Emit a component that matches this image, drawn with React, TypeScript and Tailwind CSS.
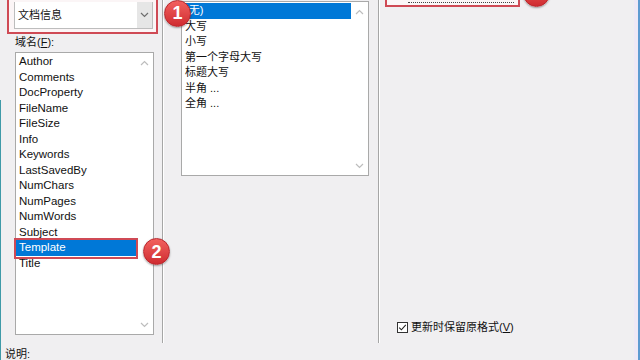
import React from "react"

const fields = [
  "Author",
  "Comments",
  "DocProperty",
  "FileName",
  "FileSize",
  "Info",
  "Keywords",
  "LastSavedBy",
  "NumChars",
  "NumPages",
  "NumWords",
  "Subject",
  "Template",
  "Title",
]

const formats = ["(无)", "大写", "小写", "第一个字母大写", "标题大写", "半角 ...", "全角 ..."]

function Chevron({ up, color = "#bdbdbd" }: { up?: boolean; color?: string }) {
  return (
    <svg width="9" height="6" viewBox="0 0 9 6">
      <polyline
        points={up ? "1,5 4.5,1.5 8,5" : "1,1 4.5,4.5 8,1"}
        fill="none"
        stroke={color}
        strokeWidth="1.2"
      />
    </svg>
  )
}

function Badge({ n, className }: { n: string; className: string }) {
  return (
    <div
      className={`absolute z-20 flex h-[27px] w-[27px] items-center justify-center rounded-full border border-[#b8262c] bg-gradient-to-b from-[#f2605f] to-[#cf2a30] text-[18px] font-bold leading-none text-white shadow-[0_1px_2px_rgba(0,0,0,0.35)] ${className}`}
    >
      {n}
    </div>
  )
}

function Separator() {
  return <div className="h-[343px] w-[2px] border-l border-r border-l-[#a6a6a6] border-r-white" />
}

export default function App() {
  return (
    <div className="flex h-[360px] w-[640px] overflow-hidden bg-[#f0eff1] font-['Liberation_Sans','Noto_Sans_CJK_SC',sans-serif] text-[11.5px] text-[#111]">
      <div className="flex w-px flex-col">
        <div className="h-[100px]" />
        <div className="flex-1 bg-[#3f9aa8]" />
      </div>

      <div className="flex flex-1 flex-col">
        <div className="flex h-[345px]">
          {/* field names */}
          <div className="w-[161px] pl-[6px]">
            <div className="-mt-[4px] w-[151px] border-2 border-[#cf4a55] bg-[#fbf5f6] pb-[3px] pl-[5px] pr-[3px] pt-[4px]">
              <div className="flex h-[27px] border border-t-0 border-[#bdbdbd] bg-white">
                <div className="flex flex-1 items-center pl-[3px] text-[11px]">文档信息</div>
                <div className="flex w-[15px] items-center justify-center bg-[#e6e6e6]">
                  <Chevron color="#6e6e6e" />
                </div>
              </div>
            </div>
            <div className="ml-[8px] mt-[1px] text-[11px] leading-[15px]">
              域名(<span className="underline">F</span>):
            </div>
            <div className="ml-[8px] mt-[2px] flex h-[283px] w-[139px] border border-[#a9a9a9] bg-white">
              <div className="flex-1 pt-[1px]">
                {fields.map((f) =>
                  f === "Template" ? (
                    <div key={f} className="relative h-[15.5px] bg-[#0078d7] pl-[3px] leading-[15.5px] text-white">
                      {f}
                      <div className="absolute -bottom-[3.5px] -left-[2px] -right-[2px] -top-[2px] border-2 border-[#cf4a55]" />
                      <Badge n="2" className="-top-[2px] left-[127px]" />
                    </div>
                  ) : (
                    <div key={f} className="h-[15.5px] pl-[3px] leading-[15.5px]">
                      {f}
                    </div>
                  )
                )}
              </div>
              <div className="flex w-[17px] flex-col items-center justify-between pb-[6px] pt-[7px]">
                <Chevron up />
                <Chevron />
              </div>
            </div>
          </div>

          <Separator />

          {/* format */}
          <div className="w-[214px] pl-[17px]">
            <div className="relative mt-[1px] flex h-[175px] w-[188px] border border-[#a9a9a9] bg-white text-[11px]">
              <Badge n="1" className="-left-[18px] -top-[2.5px]" />
              <div className="flex-1 pt-[1px]">
                {formats.map((f, i) => (
                  <div
                    key={f}
                    className={
                      i === 0
                        ? "h-[15.5px] bg-[#0078d7] pl-[3px] leading-[15.5px] text-white"
                        : "h-[15.5px] pl-[3px] leading-[15.5px]"
                    }
                  >
                    {f}
                  </div>
                ))}
              </div>
              <div className="flex w-[17px] flex-col items-center justify-between pb-[6px] pt-[7px]">
                <Chevron up />
                <Chevron />
              </div>
            </div>
          </div>

          <Separator />

          {/* options */}
          <div className="flex flex-1 flex-col justify-between">
            <div className="relative -mt-[10px] ml-[5px] h-[17px] w-[135px] border-2 border-[#cf4a55] bg-[#fbf7f8]">
              <div className="flex h-full flex-col justify-end pb-[2px] pl-[21px] pr-[4px]">
                <div className="border-b border-dotted border-[#444]" />
              </div>
              <Badge n="3" className="-top-[12.5px] left-[136px]" />
            </div>
            <div className="mb-[8px] flex h-[15px] items-center pl-[17px] text-[11px]">
              <div className="flex h-[11px] w-[11px] items-center justify-center border border-[#333] bg-white">
                <svg width="9" height="9" viewBox="0 0 9 9">
                  <polyline points="1.2,4.6 3.4,6.8 7.8,1.8" fill="none" stroke="#222" strokeWidth="1.1" />
                </svg>
              </div>
              <span className="ml-[3px]">
                更新时保留原格式(<span className="underline">V</span>)
              </span>
            </div>
          </div>
        </div>

        <div className="mt-[4px] pl-[4px] text-[11px] leading-[15px]">说明:</div>
      </div>

      <div className="w-[4px] bg-[#efe9f6]" />
      <div className="w-[2px] bg-[#5d9bd1]" />
    </div>
  )
}
